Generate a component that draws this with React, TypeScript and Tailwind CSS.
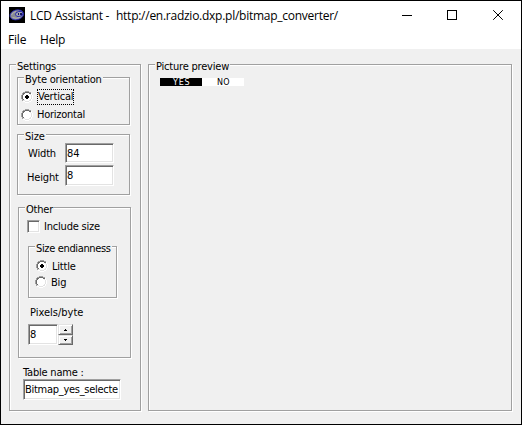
import type { ReactNode } from "react";

function GroupBox({ title, tracking, className, children }: { title: string; tracking: string; className: string; children?: ReactNode }) {
  return (
    <fieldset className={`flex flex-col items-start border border-[#a0a0a0] shadow-[1px_1px_0_#fff,inset_1px_1px_0_#fff] ${className}`}>
      <div className="h-0 pl-[6px]">
        <div className={`relative -top-[5px] h-[13px] whitespace-nowrap bg-[#f0f0f0] px-px leading-[13px] ${tracking}`}>{title}</div>
      </div>
      {children}
    </fieldset>
  );
}

function Radio({ checked }: { checked?: boolean }) {
  return (
    <svg width="12" height="12" viewBox="0 0 12 12" shapeRendering="crispEdges" className="shrink-0">
      <path fill="#fff" d="M4 2h4v1h1v1h1v4h-1v1h-1v1h-4v-1h-1v-1h-1v-4h1v-1h1z" />
      <path fill="#a0a0a0" d="M4 0h4v1h-4zM2 1h2v1h-2zM8 1h2v1h-2zM1 2h1v2h-1zM0 4h1v4h-1zM1 8h1v2h-1z" />
      <path fill="#696969" d="M4 1h4v1h-4zM2 2h2v1h-2zM8 2h2v1h-2zM2 3h1v1h-1zM1 4h1v4h-1zM2 8h1v1h-1z" />
      <path fill="#e3e3e3" d="M9 3h1v1h-1zM10 4h1v4h-1zM9 8h1v1h-1zM8 9h2v1h-2zM2 9h2v1h-2zM4 10h4v1h-4z" />
      <path fill="#fff" d="M10 2h1v2h-1zM11 4h1v4h-1zM10 8h1v2h-1zM8 10h2v1h-2zM2 10h2v1h-2zM4 11h4v1h-4z" />
      {checked && <path fill="#000" d="M5 4h2v1h1v2h-1v1h-2v-1h-1v-2h1z" />}
    </svg>
  );
}

const sunken = "border border-t-[#a0a0a0] border-l-[#a0a0a0] border-r-white border-b-white shadow-[inset_1px_1px_0_#696969,inset_-1px_-1px_0_#e3e3e3]";

function Field({ value, className }: { value: string; className: string }) {
  return (
    <div className={`${sunken} overflow-hidden bg-white px-px pt-[2px] leading-[16px] whitespace-nowrap ${className}`}>{value}</div>
  );
}

function SpinButton({ up, className }: { up?: boolean; className: string }) {
  return (
    <button className={`flex w-[15px] items-center justify-center border border-t-[#e3e3e3] border-l-[#e3e3e3] border-r-[#696969] border-b-[#696969] bg-[#f0f0f0] shadow-[inset_1px_1px_0_#fff,inset_-1px_-1px_0_#a0a0a0] ${className}`}>
      <svg width="3" height="2" viewBox="0 0 3 2" shapeRendering="crispEdges">
        <path d={up ? "M1 0h1v1h1v1h-3v-1h1z" : "M0 0h3v1h-1v1h-1v-1h-1z"} />
      </svg>
    </button>
  );
}

export default function App() {
  return (
    <div className="flex h-[425px] w-[522px] flex-col overflow-hidden border border-black bg-[#f0f0f0] font-['DejaVu_Sans_Condensed','DejaVu_Sans',sans-serif] text-[11px] text-black">
      <header className="flex h-[30px] shrink-0 items-start bg-white pl-[8px] font-['Open_Sans','Noto_Sans',sans-serif] text-[12px]">
        <svg width="16" height="16" viewBox="0 0 16 16" className="mt-[6px]">
          <path fill="#000" d="M0 0h16v16h-16z" />
          <ellipse cx="7.8" cy="7.8" rx="6.9" ry="4.9" fill="#8a8b90" stroke="#2424b8" strokeWidth=".8" transform="rotate(-14 8 8)" />
          <ellipse cx="10.2" cy="7" rx="3.8" ry="2.5" fill="#a4a6ae" stroke="#1a1ab4" strokeWidth=".8" transform="rotate(-12 10 7)" />
          <path d="M2.5 8Q4 5 7 4.5M3.5 10.5Q7 12 11 10.5" fill="none" stroke="#b0b1b6" />
          <path d="M9 6h1v2h-1zM11 6h2v2h-2z" fill="#14145a" />
        </svg>
        <h1 className="mt-[7px] ml-[5px] flex w-[320px] leading-[16px] whitespace-nowrap">
          <span className="w-[86px] tracking-[-0.25px]">LCD Assistant -</span>
          <span className="tracking-[-0.26px]">http://en.radzio.dxp.pl/bitmap_converter/</span>
        </h1>
        <svg width="101" height="10" viewBox="0 0 101 10" className="mt-[9px] ml-[52px]" fill="none" stroke="#000">
          <path d="M0 5.5h10M45.5.5h9v9h-9z" shapeRendering="crispEdges" />
          <path d="M91.2.2l9.6 9.6M100.8.2l-9.6 9.6" />
        </svg>
      </header>
      <nav className="flex h-[18px] shrink-0 bg-white pl-[7px] font-['Open_Sans','Noto_Sans',sans-serif] text-[12px] leading-[18px] tracking-[-0.2px]">
        <span className="w-[32px]">File</span>
        <span>Help</span>
      </nav>
      <main className="flex gap-[7px] pt-[15px] pl-[8px]">
        <GroupBox title="Settings" tracking="tracking-[-0.2px]" className="h-[347px] w-[132px]">
          <GroupBox title="Byte orientation" tracking="tracking-[-0.2px]" className="mt-[12px] ml-[7px] h-[48px] w-[113px]">
            <label className="mt-[10px] ml-[3px] flex h-[17px] items-center gap-[4px]">
              <Radio checked />
              <span className="h-[16px] w-[37px] border border-dotted border-black leading-[14px] tracking-[-0.2px] whitespace-nowrap">Vertical</span>
            </label>
            <label className="mt-px ml-[3px] flex h-[17px] items-center gap-[4px] tracking-[-0.25px]">
              <Radio />
              <span className="pt-px">Horizontal</span>
            </label>
          </GroupBox>
          <GroupBox title="Size" tracking="tracking-[-0.2px]" className="mt-[9px] ml-[7px] h-[61px] w-[113px]">
            <div className="mt-[8px] ml-[9px] flex h-[21px]">
              <span className="w-[38px] pt-[3px] pl-px leading-[16px] tracking-[-0.15px]">Width</span>
              <Field value="84" className="h-[20px] w-[49px]" />
            </div>
            <div className="mt-px ml-[9px] flex h-[21px]">
              <span className="w-[38px] pt-[5px] leading-[16px] tracking-[-0.15px]">Height</span>
              <Field value="8" className="h-[21px] w-[49px]" />
            </div>
          </GroupBox>
          <GroupBox title="Other" tracking="tracking-[-0.2px]" className="mt-[12px] ml-[8px] h-[151px] w-[113px]">
            <label className="mt-[12px] ml-[8px] flex h-[13px] items-center gap-[4px] tracking-[-0.2px]">
              <span className={`${sunken} size-[13px] bg-white`} />
              <span className="pt-px">Include size</span>
            </label>
            <GroupBox title="Size endianness" tracking="tracking-[-0.35px]" className="mt-[13px] ml-[9px] h-[52px] w-[89px]">
              <label className="mt-[13px] ml-[7px] flex h-[12px] items-center gap-[4px] tracking-[-0.2px]">
                <Radio checked />
                <span className="pt-[2px]">Little</span>
              </label>
              <label className="mt-[4px] ml-[6px] flex h-[12px] items-center gap-[4px] tracking-[-0.2px]">
                <Radio />
                <span className="pt-[2px]">Big</span>
              </label>
            </GroupBox>
            <span className="mt-[7px] ml-[11px] leading-[16px]">Pixels/byte</span>
            <div className="mt-[3px] ml-[9px] flex">
              <Field value="8" className="h-[21px] w-[30px]" />
              <div className="h-[22px]">
                <SpinButton up className="h-[11px]" />
                <SpinButton className="h-[10px]" />
              </div>
            </div>
          </GroupBox>
          <span className="mt-[8px] ml-[13px] h-[13px] leading-[14px] tracking-[-0.2px]">Table name :</span>
          <Field value="Bitmap_yes_selecte" className="ml-[13px] h-[21px] w-[98px] tracking-[-0.28px]" />
        </GroupBox>
        <GroupBox title="Picture preview" tracking="tracking-[-0.2px]" className="h-[347px] w-[364px]">
          <div className="mt-[13px] ml-[11px] flex h-[8px] w-[84px] font-['DejaVu_Sans',sans-serif] text-[8px] leading-[10px]">
            <span className="w-[42px] bg-black pl-[13px] tracking-[0.8px] text-white">YES</span>
            <span className="w-[42px] bg-white pl-[15px] tracking-[0.2px]">NO</span>
          </div>
        </GroupBox>
      </main>
    </div>
  );
}
